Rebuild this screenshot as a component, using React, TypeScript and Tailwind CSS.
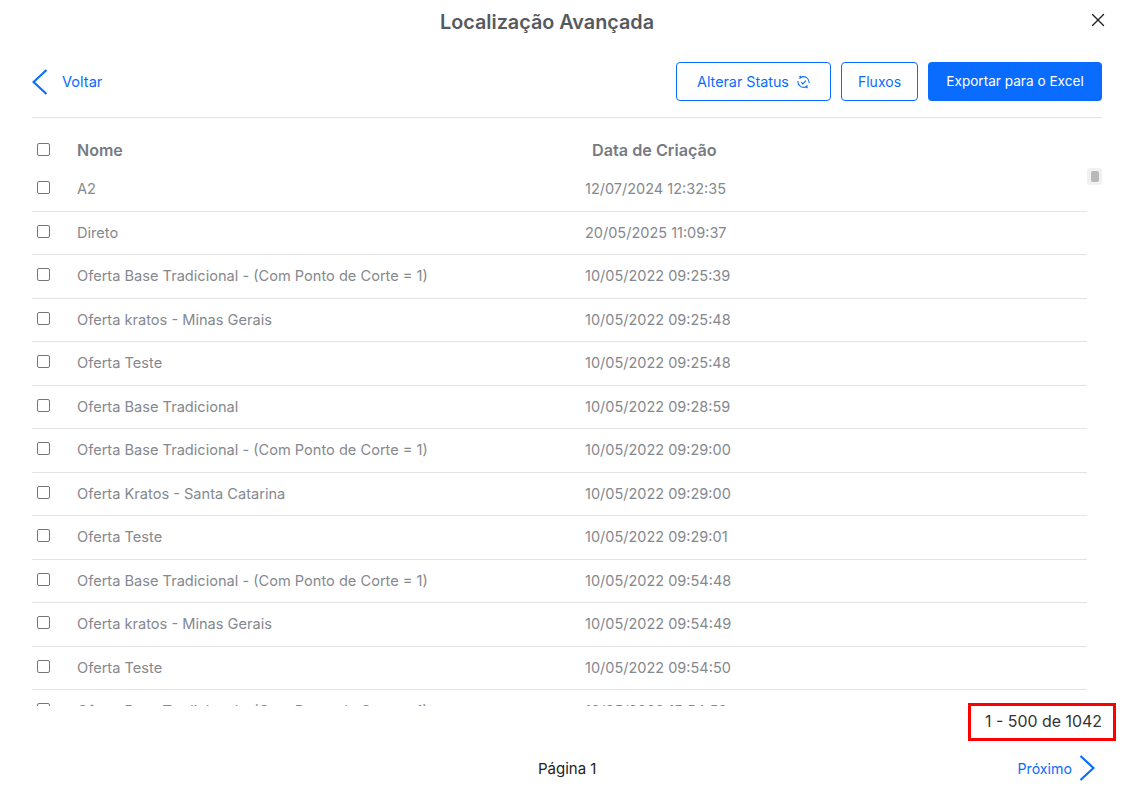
import { X } from 'lucide-react';

const rows = [
  { nome: 'A2', data: '12/07/2024 12:32:35' },
  { nome: 'Direto', data: '20/05/2025 11:09:37' },
  { nome: 'Oferta Base Tradicional - (Com Ponto de Corte = 1)', data: '10/05/2022 09:25:39' },
  { nome: 'Oferta kratos - Minas Gerais', data: '10/05/2022 09:25:48' },
  { nome: 'Oferta Teste', data: '10/05/2022 09:25:48' },
  { nome: 'Oferta Base Tradicional', data: '10/05/2022 09:28:59' },
  { nome: 'Oferta Base Tradicional - (Com Ponto de Corte = 1)', data: '10/05/2022 09:29:00' },
  { nome: 'Oferta Kratos - Santa Catarina', data: '10/05/2022 09:29:00' },
  { nome: 'Oferta Teste', data: '10/05/2022 09:29:01' },
  { nome: 'Oferta Base Tradicional - (Com Ponto de Corte = 1)', data: '10/05/2022 09:54:48' },
  { nome: 'Oferta kratos - Minas Gerais', data: '10/05/2022 09:54:49' },
  { nome: 'Oferta Teste', data: '10/05/2022 09:54:50' },
  { nome: 'Oferta Base Tradicional - (Com Ponto de Corte = 1)', data: '10/05/2022 15:54:52' },
];

const Checkbox = () => (
  <input
    type="checkbox"
    className="appearance-none block w-[13px] h-[13px] rounded-[2px] border border-[#767676] bg-white"
  />
);

const SyncIcon = () => (
  <svg width="13" height="14" viewBox="0 0 12 13" fill="none" stroke="#0a6cff" strokeWidth="1">
    <path d="M3.4 2.2A5.2 5.2 0 0 1 11.1 7.4" />
    <path d="M8.6 10.8A5.2 5.2 0 0 1 0.9 5.6" />
    <path d="M3.8 6.6l1.6 1.7 2.8-3.1" />
    <path d="M2.4 0.8l1.2 1.4-1.4 1" strokeWidth="1.3" />
    <path d="M9.6 12.2l-1.2-1.4 1.4-1" strokeWidth="1.3" />
  </svg>
);

// the back/next chevrons are taller and wider than the lucide ones
const Chevron = ({ dir }: { dir: 'left' | 'right' }) => (
  <svg width="16" height="26" viewBox="0 0 16 26" fill="none" stroke="#0a6cff" strokeWidth="2.2">
    <path d={dir === 'left' ? 'M14.5 1L1.5 13l13 12' : 'M1.5 1l13 12-13 12'} />
  </svg>
);

export default function App() {
  return (
    <div className="relative h-[792px] bg-white overflow-hidden font-['Inter',sans-serif]">
      {/* Header */}
      <div className="flex items-center justify-center h-[44px] pt-px pr-[34px]">
        <h1 className="text-[19.8px] font-semibold text-[#555a60]">Localização Avançada</h1>
      </div>
      <button className="absolute top-[9px] right-[19px] text-[#222]">
        <X size={22} strokeWidth={1.5} />
      </button>

      <div className="px-[26px] pl-[32px]">
        {/* Toolbar */}
        <div className="flex items-center justify-between mt-[18px] h-[39px]">
          <button className="flex items-center gap-[14px] text-[14.6px] text-[#0a6cff]">
            <Chevron dir="left" />
            <span className="pt-[2px]">Voltar</span>
          </button>
          <div className="flex gap-[10px] text-[14px]">
            <button className="flex items-center justify-center gap-[8px] w-[155px] h-[39px] rounded-[4px] border border-[#0a6cff] text-[14.3px] text-[#0a6cff]">
              Alterar Status <SyncIcon />
            </button>
            <button className="w-[77px] h-[39px] rounded-[4px] border border-[#0a6cff] text-[#0a6cff]">
              Fluxos
            </button>
            <button className="w-[174px] h-[39px] rounded-[4px] bg-[#0a6cff] text-[13.6px] text-white">
              Exportar para o Excel
            </button>
          </div>
        </div>
        <div className="h-px bg-[#e3e3e3] mt-[16px]" />

        {/* Table */}
        <div className="flex items-center h-[50px] pt-[14px] w-[1055px] text-[16px] font-semibold text-[#777b82]">
          <div className="w-[45px] pl-[5px] pb-[2px]"><Checkbox /></div>
          <div className="w-[515px]">Nome</div>
          <div className="text-[16.2px]">Data de Criação</div>
        </div>
        <div className="h-[538px] w-[1055px] overflow-hidden">
          {rows.map((r, i) => (
            <div
              key={i}
              className="flex items-center h-[43.5px] border-b border-[#e3e3e3] text-[14.6px] text-[#85888e]"
            >
              <div className="w-[45px] pl-[5px] pb-[3px]"><Checkbox /></div>
              <div className="w-[508px] pt-[2px]">{r.nome}</div>
              <div className="text-[14.5px]">{r.data}</div>
            </div>
          ))}
        </div>
      </div>

      {/* Scrollbar */}
      <div className="absolute left-[1087px] top-[168px] w-[15px] h-[17px] rounded-[3px] bg-[#f1f1f1] flex items-center justify-center">
        <div className="w-[8px] h-[11px] rounded-[2px] bg-[#b9b9b9]" />
      </div>

      {/* Footer */}
      <div className="absolute left-[968px] top-[703px] w-[148px] h-[38px] border-[3px] border-[#ff0000] flex items-center justify-center pl-[3px] text-[15.9px] text-[#333]">
        1 - 500 de 1042
      </div>
      <div className="absolute left-0 right-[33px] top-[750px] h-[36px] flex items-center">
        <div className="w-[538px]" />
        <span className="pt-[2px] text-[15px] text-[#222]">Página 1</span>
        <div className="ml-auto flex items-center gap-[7px] text-[14.2px] text-[#0a6cff]">
          <span className="pt-[2px]">Próximo</span>
          <Chevron dir="right" />
        </div>
      </div>
    </div>
  );
}
